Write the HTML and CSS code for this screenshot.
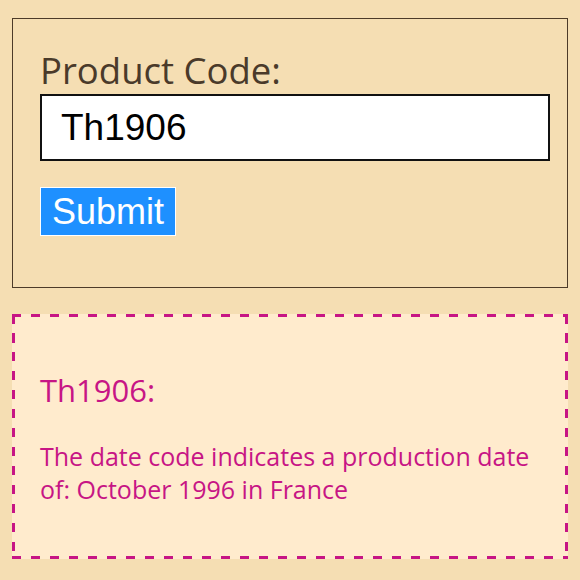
FILE: index.html
```html
<!DOCTYPE html>
<html lang="en">
<head>
    <meta charset="UTF-8">
    <meta name="viewport" content="width=device-width, initial-scale=1.0">
    <title>Date Code Lookup</title>
    <link rel="stylesheet" href="styles.css">
</head>
<body>
    <div class="page">
        <form class="lookup-form">
            <label for="product-code">Product Code:</label>
            <input type="text" id="product-code" value="Th1906">
            <button type="button" class="submit-btn">Submit</button>
        </form>
        <div class="result-box">
            <div class="result-code">Th1906:</div>
            <p class="result-text">The date code indicates a production date of: October 1996 in France</p>
        </div>
    </div>
</body>
</html>
```

FILE: styles.css
```css
body {
    background: #f5deb3;
    font-family: "Open Sans", "Noto Sans", sans-serif;
    margin: 0;
    padding: 0;
}
.page {
    display: flex;
    flex-direction: column;
    gap: 26px;
    padding: 18px 12px;
}
.lookup-form {
    border: 1px solid #4d3b29;
    padding: 31px 19px 51px 27px;
    margin: 0;
}
.lookup-form label {
    display: block;
    font-size: 36.5px;
    line-height: 40px;
    color: #4a3a2a;
}
.lookup-form input {
    display: block;
    box-sizing: border-box;
    width: 510px;
    height: 67px;
    margin: 4px 0 0 0;
    padding: 0 19px;
    border: 2px solid #111;
    background: #fff;
    font-family: "Liberation Sans", Arial, sans-serif;
    font-size: 37px;
    color: #000;
}
.submit-btn {
    display: block;
    margin-top: 26px;
    height: 49px;
    padding: 0 11px;
    background: #1e90ff;
    border: 1px solid #fff;
    color: #fff;
    font-family: "Liberation Sans", Arial, sans-serif;
    font-size: 36px;
}
/* dashed border drawn with gradients to get the longer dashes */
.result-box {
    height: 245px;
    box-sizing: border-box;
    padding: 56px 20px 0 25px;
    border: 3px solid transparent;
    background-color: #ffebcd;
    background-image:
        repeating-linear-gradient(90deg, #c71585 0 9.5px, transparent 9.5px 19px),
        repeating-linear-gradient(90deg, #c71585 0 9.5px, transparent 9.5px 19px),
        repeating-linear-gradient(180deg, #c71585 0 9.5px, transparent 9.5px 19px),
        repeating-linear-gradient(180deg, #c71585 0 9.5px, transparent 9.5px 19px);
    background-size: 100% 3px, 100% 3px, 3px 100%, 3px 100%;
    background-position: left top, left bottom, left top, right top;
    background-repeat: no-repeat;
    background-origin: border-box;
    color: #c71585;
}
.result-code {
    font-size: 31px;
    line-height: 34px;
}
.result-text {
    margin: 33px 0 0 0;
    font-size: 25px;
    line-height: 33px;
}
```
